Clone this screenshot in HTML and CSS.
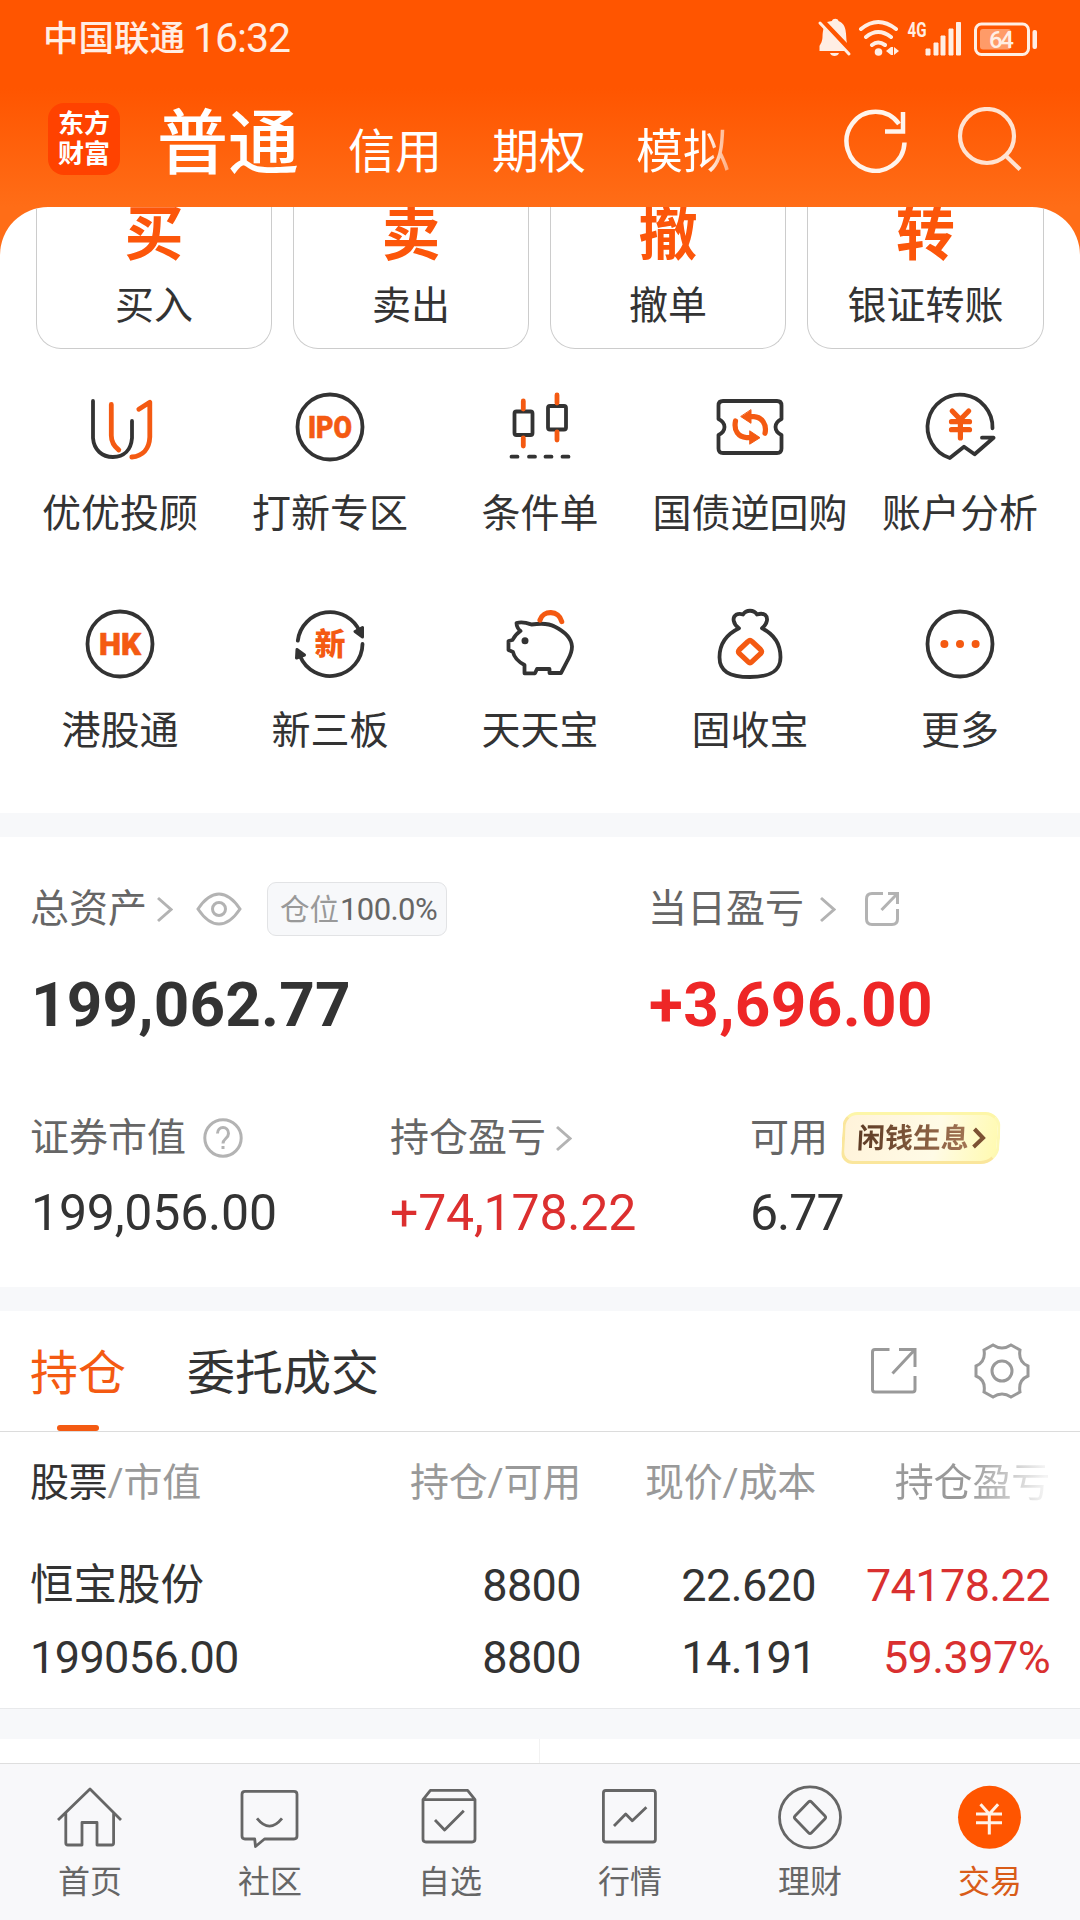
FILE: index.html
```html
<!DOCTYPE html>
<html lang="zh-CN">
<head>
<meta charset="utf-8">
<title>交易</title>
<link rel="stylesheet" href="styles.css">
</head>
<body>
<div class="app">
  <header class="header">
    <div class="status">
      <span class="carrier">中国联通</span><span class="clock">16:32</span>
      <svg class="status-icons" width="230" height="44" viewBox="0 0 230 44" fill="#ffeee4">
        <path d="M10 38h24L12 14c-1 3-1.500 6-1.500 10-.2 5-2 7-3 9v5zM15 9L35 30c-1-3-.5-8-1.500-13C32.500 11 29 9 26.500 8c-.5-3-6-3-6.500 0-2 .2-3.500.7-5 1zM18 40h9c-1 4-8 4-9 0z"/>
        <path d="M8 10L37 41" stroke="#ffeee4" stroke-width="3" stroke-linecap="round"/>
        <g fill="none" stroke="#ffeee4" stroke-width="4" stroke-linecap="round"><path d="M49 16q17-14 35 0M54 24q12-10 25 0M60 32q6-5 13 0"/></g>
        <circle cx="66.500" cy="39" r="3.800"/><path d="M74 38l5-4v8zM82 34l5 4-5 4zM79 34h2v8h-2z"/>
        <text x="95.500" y="24" class="net" textLength="19" lengthAdjust="spacingAndGlyphs">4G</text>
        <path d="M114 36h4v6h-4zM122 30h4v12h-4zM129 23h4v19h-4zM137 16h4v26h-4zM144.500 9.500h4v32.500h-4z" stroke="#ffeee4" stroke-width="1" stroke-linejoin="round"/>
        <rect x="163.500" y="11" width="53" height="30.500" rx="6" fill="none" stroke="#ffeee4" stroke-width="3"/>
        <rect x="168" y="16" width="31" height="20.500" rx="3" fill="#ff9b68"/><rect x="220.500" y="17" width="4.500" height="19" rx="2"/>
        <text x="177" y="35" class="batt" textLength="25">64</text>
      </svg>
    </div>
    <nav class="top-nav">
      <div class="logo"><span>东方</span><span>财富</span></div>
      <div class="accounts"><span class="account current">普通</span><span class="account">信用</span><span class="account">期权</span><span class="account fade-tab">模拟</span></div>
      <svg class="refresh" width="66" height="66" viewBox="0 0 66 66" fill="none" stroke="#fff4ec" stroke-width="4.500"><path d="M61.500 35.500A29 29.500 0 1 1 56 17"/><path d="M60 5v19.500H42"/></svg>
      <svg class="search" width="66" height="66" viewBox="0 0 66 66" fill="none" stroke="#ffe3d2" stroke-width="4.200"><circle cx="31" cy="29" r="27"/><path d="M50 49l14 13.500"/></svg>
    </nav>
  </header>

  <main class="sheet">
    <section class="trade-cards">
      <div class="trade-card"><b>买</b><span>买入</span></div>
      <div class="trade-card"><b>卖</b><span>卖出</span></div>
      <div class="trade-card"><b>撤</b><span>撤单</span></div>
      <div class="trade-card"><b>转</b><span>银证转账</span></div>
    </section>

    <section class="shortcuts">
      <div class="shortcut"><svg class="icon" viewBox="0 0 80 80"><path d="M13 14v37c1 12 9 19 20 19s18-7 19-19V34"/><path class="o" d="M31.300 17.500v31c0 7 3 11 7.500 14.500M58.800 22.300l11-7V50c-.5 12-7 19-18 20"/></svg><span>优优投顾</span></div>
      <div class="shortcut"><svg class="icon" viewBox="0 0 80 80"><circle cx="40" cy="40" r="32.500"/><text x="18" y="51" textLength="44" lengthAdjust="spacingAndGlyphs">IPO</text></svg><span>打新专区</span></div>
      <div class="shortcut"><svg class="icon" viewBox="0 0 80 80"><rect x="14.500" y="24.500" width="18" height="23.500" rx="2"/><rect x="48" y="19" width="18" height="23.500" rx="2"/><path class="o" d="M23.300 14v8M23.300 51v8M57 8v8M57 45v8"/><path d="M11.500 69.700h6M29 69.700h6M45.500 69.700h6M62.500 69.700h6"/></svg><span>条件单</span></div>
      <div class="shortcut"><svg class="icon" viewBox="0 0 80 80"><path d="M13 14h54q4.500 0 4.500 4.500V32q-6 3-6 8t6 8v13.500q0 4.500-4.500 4.500H13q-4.500 0-4.500-4.500V48q6-3 6-8t-6-8V18.500Q8.500 14 13 14z"/><path class="o thick" d="M25.500 34c-2 10 3 16 11 16.700h5M55 46.300c2-9-3-16-11-16.600h-5"/><path class="of" d="M40 44l10 6.700L40 57zM41 23v13.300l-10-6.600z"/></svg><span>国债逆回购</span></div>
      <div class="shortcut"><svg class="icon" viewBox="0 0 80 80"><path d="M72.500 41.300A32.500 32.500 0 1 0 29.800 71L44 59.700l10.600 7.600 19-16.600H62"/><path class="o thick" d="M32.200 24l8.200 8.500L48.700 24M40.400 32.500V51M31.500 34.700h18M31.500 42.700h18"/></svg><span>账户分析</span></div>
      <div class="shortcut"><svg class="icon" viewBox="0 0 80 80"><circle cx="40" cy="40" r="32.500"/><text x="19" y="51" textLength="42" lengthAdjust="spacingAndGlyphs">HK</text></svg><span>港股通</span></div>
      <div class="shortcut"><svg class="icon" viewBox="0 0 80 80"><path d="M7.800 36.700A32.500 32.500 0 0 1 70 28M72.500 40A32.500 32.500 0 0 1 10 52"/><path class="df" d="M65 27.500l7.500-4V33zM7 45.500l7.500 5.500-8 3z"/><text class="xin" x="24.500" y="51">新</text></svg><span>新三板</span></div>
      <div class="shortcut"><svg class="icon" viewBox="0 0 80 80"><path d="M16.500 19c6-2 11 0 15 1.500 7-1 16-2 23 2 10 5 17 12 17.500 20 0 7-3 11-5 15l-6 11.500H49.500V65H37l-2 4.300H24.500V61C17 57 14 53 13 48l-4.500-2V37l4-1c2-4 5-7 8-9-2-1-4-5-4-8z"/><circle class="df" cx="25" cy="36.700" r="2"/><path class="o thick" d="M40 16c3-10 19-10 21.700 1.500"/></svg><span>天天宝</span></div>
      <div class="shortcut"><svg class="icon" viewBox="0 0 80 80"><path d="M29 24.300c-6-4-7-11-3-13.500 2-1 5-1 7-.3 3-5 11-5 14 0 3-1 6-1 8 .3 3.500 3 2.500 9-3 13.500 12 6 18.500 16 18.500 29C70.500 67 61 73 40 73S9.500 67 9.500 53.300c0-13 7-23 19.500-29z"/><path class="o thick" d="M38 37.500q2-2 4 0l8.500 8q2 2 0 4.200l-8.500 8q-2 2-4 0l-8.500-8q-2-2 0-4.200z"/></svg><span>固收宝</span></div>
      <div class="shortcut"><svg class="icon" viewBox="0 0 80 80"><circle cx="40" cy="40" r="32.500"/><g class="dots"><circle cx="24.400" cy="40" r="4"/><circle cx="40" cy="40" r="4"/><circle cx="55.600" cy="40" r="4"/></g></svg><span>更多</span></div>
    </section>

    <section class="assets band">
      <div class="totals">
        <div class="total">
          <div class="label">总资产
            <svg class="chev" viewBox="0 0 18 28"><path d="M3 3l13 11.500L3 26"/></svg>
            <svg class="eye" viewBox="0 0 46 34"><path d="M2 17Q12 2 23 2t21 15Q34 32 23 32T2 17z"/><circle cx="23" cy="17" r="6.500"/></svg>
            <span class="position">仓位<em>100.0%</em></span>
          </div>
          <div class="big">199,062.77</div>
        </div>
        <div class="total">
          <div class="label">当日盈亏
            <svg class="chev far" viewBox="0 0 18 28"><path d="M3 3l13 11.500L3 26"/></svg>
            <svg class="share" viewBox="0 0 36 36"><path d="M19 2.500H8Q2.500 2.500 2.500 8v20q0 5.500 5.500 5.500h20q5.500 0 5.500-5.500V18M24 2.500h9.500V13M33 3L17.500 19"/></svg>
          </div>
          <div class="big red">+3,696.00</div>
        </div>
      </div>
      <div class="details">
        <div class="detail">
          <div class="label">证券市值<svg class="help" viewBox="0 0 40 40"><circle cx="20" cy="20" r="18.200"/><path d="M14.500 15.500c0-8 11-8 11 0 0 5-5.500 5-5.500 10M20 28v3"/></svg></div>
          <div class="amount">199,056.00</div>
        </div>
        <div class="detail">
          <div class="label">持仓盈亏<svg class="chev near" viewBox="0 0 18 28"><path d="M3 3l13 11.500L3 26"/></svg></div>
          <div class="amount red">+74,178.22</div>
        </div>
        <div class="detail">
          <div class="label">可用<span class="promo"><span>闲钱生息</span><svg viewBox="0 0 14 22"><path d="M2 2l9 9-9 9"/></svg></span></div>
          <div class="amount available">6.77</div>
        </div>
      </div>
    </section>

    <section class="holdings band">
      <div class="tabs">
        <span class="tab active">持仓</span><span class="tab">委托成交</span>
        <svg class="tab-share" viewBox="0 0 48 48"><path d="M19.500 2.500H5q-2.500 0-2.500 2.500v37.500Q2.500 45 5 45h37.500q2.500 0 2.500-2.500V29M29 2.500h16V20M44 3.500L22.500 26.500"/></svg>
        <svg class="gear" viewBox="0 0 56 56"><path d="M19 2q9 6 18 0l9 5q-2 12 8 16v10q-10 4-8 16l-9 5q-9-6-18 0l-9-5q2-12-8-16V23q10-4 8-16z"/><circle cx="28" cy="28" r="10"/></svg>
      </div>
      <div class="grid table-head"><span><i>股票</i>/市值</span><span>持仓/可用</span><span>现价/成本</span><span class="fade-col">持仓盈亏</span></div>
      <div class="grid table-name"><span class="stock">恒宝股份</span><span>8800</span><span>22.620</span><span class="red">74178.22</span></div>
      <div class="grid table-value"><span>199056.00</span><span>8800</span><span>14.191</span><span class="red">59.397%</span></div>
    </section>
    <section class="more-panel"><div></div><div></div></section>
  </main>

  <nav class="bottom-nav">
    <div class="item"><svg viewBox="0 0 70 70"><path d="M3 38L35 7l31 31M10.800 31v30q0 2 2 2H27V40.500h15V63h14.600q2 0 2-2V31"/></svg><span>首页</span></div>
    <div class="item"><svg viewBox="0 0 70 70"><path d="M10 9.300h49q3 0 3 3V54q0 3-3 3H29.500l-9 7.500-.8-7.500H10q-3 0-3-3V12.300q0-3 3-3zM22 36.300q12.500 15.500 25 0"/></svg><span>社区</span></div>
    <div class="item"><svg viewBox="0 0 70 70"><path d="M8 17.700V57q0 3 3 3h46q3 0 3-3V17.700L52.600 8.300H15.400zh52M20 38l9.600 10 19.200-19.300"/></svg><span>自选</span></div>
    <div class="item"><svg viewBox="0 0 70 70"><rect x="8.400" y="8.500" width="52" height="51.500" rx="2.500"/><path d="M19 44l11.700-12 6.600 6.800L51.400 25.300"/></svg><span>行情</span></div>
    <div class="item"><svg viewBox="0 0 70 70"><circle cx="35" cy="35.300" r="30.500"/><path d="M33.500 20q1.500-1.500 3 0l13.500 14q1.300 1.400 0 2.800l-13.500 14q-1.500 1.500-3 0L20 36.800q-1.300-1.400 0-2.800z"/></svg><span>理财</span></div>
    <div class="item on"><svg viewBox="0 0 70 70"><circle class="disc" cx="34.500" cy="35.300" r="31.500"/><path d="M25.500 22.300L34.300 32l8.800-9.700M34.300 32v20.500M21 32h26M21 40.700h26"/></svg><span>交易</span></div>
  </nav>
</div>
</body>
</html>
```
FILE: styles.css
```css
* { box-sizing: border-box; }
body { margin: 0; background: #fff; }
svg { flex: none; display: block; }
.app {
  width: 1080px; height: 1920px; overflow: hidden;
  display: flex; flex-direction: column;
  font-family: Roboto, "Noto Sans CJK SC", sans-serif;
  color: #333; font-size: 39px; line-height: 48px; white-space: nowrap;
  background: linear-gradient(#ff5500 88px, #ff6d17 207px);
}
.header { height: 207px; flex: none; display: flex; flex-direction: column; }
.status { height: 76px; display: flex; align-items: center; padding-left: 43px; color: #ffeee4; }
.carrier { font-size: 35.5px; font-weight: 500; padding-top: 2px; }
.clock { font-size: 41px; margin-left: 8px; letter-spacing: -1px; }
.status-icons { margin: 0 38px 6px auto; }
.net { font: bold 21px Roboto, sans-serif; }
.batt { font: 500 24px Roboto, sans-serif; }
.top-nav { height: 131px; display: flex; padding-left: 48px; color: #fff; }
.logo {
  width: 72px; height: 72px; margin-top: 27px; border-radius: 16px; background: #ff4200;
  display: flex; flex-direction: column; align-items: center; justify-content: center;
  font-size: 26px; font-weight: 700; line-height: 30px;
}
.accounts { width: 667px; margin-left: 37px; display: flex; align-items: baseline; padding-top: 26px; }
.account { font-size: 47px; line-height: 84px; width: 144px; }
.current { font-size: 71px; font-weight: 500; width: 191px; }
.fade-tab { background: linear-gradient(90deg, #fff 48%, #ffac7e 64%); -webkit-background-clip: text; background-clip: text; color: transparent; }
.refresh { margin: 31px 0 0 19px; }
.search { margin: 31px 0 0 47px; }

.sheet { flex: 1; background: #fff; border-radius: 48px 48px 0 0; overflow: hidden; }
.trade-cards { display: grid; grid-template-columns: repeat(3, 236px) 237px; gap: 21px; padding: 0 36px; height: 142px; }
.trade-card {
  height: 142px; border: 1px solid #ccc; border-top: 0; border-radius: 0 0 25px 25px;
  display: flex; flex-direction: column; align-items: center; justify-content: flex-end; padding-bottom: 18px;
}
.trade-card b { font-size: 59px; line-height: 60px; color: #fc560a; margin-bottom: 17px; }

.shortcuts { display: grid; grid-template-columns: repeat(5, 210px); grid-auto-rows: 217px; padding: 38px 15px 0; height: 464px; }
.shortcut { display: flex; flex-direction: column; align-items: center; }
.shortcut span { margin-top: 23px; }
.icon { width: 80px; height: 80px; fill: none; stroke: #333; stroke-width: 3.8px; stroke-linecap: round; stroke-linejoin: round; }
.icon .o { stroke: #f45a12; stroke-width: 4.8px; }
.icon .thick { stroke-width: 5.2px; }
.icon .of { fill: #f45a12; stroke: #f45a12; stroke-width: 1px; }
.icon .df { fill: #333; stroke-width: 3px; }
.icon text { font: 900 31px Roboto, sans-serif; fill: #f45a12; stroke: #f45a12; stroke-width: .6px; }
.icon .xin { font: 900 31px "Noto Sans CJK SC", sans-serif; stroke: none; }
.icon .dots { fill: #f45a12; stroke: none; }

.band { border-top: 24px solid #f7f8fa; }
.assets { height: 474px; padding: 45px 30px 0; color: #666; }
.totals { display: grid; grid-template-columns: 618px 1fr; }
.label { display: flex; align-items: center; height: 54px; }
.label svg { fill: none; stroke: #b3b3b3; stroke-width: 3px; }
.chev { width: 18px; height: 28px; margin-left: 8px; }
.far { margin-left: 14px; }
.eye { width: 46px; height: 34px; margin-left: 23px; }
.position {
  width: 180px; height: 54px; margin-left: 25px; border: 1px solid #e2e3e5; border-radius: 9px; background: #f7f8fa;
  font-size: 29.5px; line-height: 54px; padding-left: 12px; color: #999;
}
.position em { font-style: normal; color: #666; font-size: 31px; letter-spacing: -.6px; margin-left: 1px; }
.share { width: 36px; height: 36px; margin-left: 28px; }
.big { font-size: 62px; font-weight: 700; line-height: 72px; margin-top: 33px; color: #333; letter-spacing: .2px; padding-left: 1px; }
.assets .red { color: #ee2626; }
.big.red { letter-spacing: .4px; }
.details { display: grid; grid-template-columns: 360px 360px 1fr; margin-top: 70px; }
.help { width: 40px; height: 40px; margin-left: 17px; }
.near { margin-left: 8px; }
.amount { font-size: 50px; line-height: 60px; color: #333; margin-top: 18px; letter-spacing: -.2px; padding-left: 1px; }
.details .amount.red { color: #dc2f2f; padding-left: 0; }
.available { letter-spacing: -1px; padding-left: 0; }
.promo {
  width: 158px; height: 52px; margin-left: 14px; border: 3px solid #fae69c; border-top-color: #fdf6a8; border-right-color: #fdf8b4; border-radius: 14px 16px 18px 12px;
  background: linear-gradient(100deg, #fff3da, #fffbe6 60%, #fffab0); transform: skewX(-3deg);
  display: flex; align-items: center; gap: 3px; padding-left: 12px; font-size: 28px; font-weight: 700; line-height: 40px;
}
.promo span { background: linear-gradient(90deg, #5d3b24, #a27453); -webkit-background-clip: text; background-clip: text; color: transparent; padding-top: 2px; }
.promo svg { width: 14px; height: 22px; stroke: #7c5132; stroke-width: 4px; }

.holdings { height: 422px; border-bottom: 1px solid #e8e9eb; }
.tabs { height: 121px; border-bottom: 1px solid #dcdcdc; display: flex; padding-left: 30px; font-size: 48px; line-height: 125px; }
.tab { margin-right: 61px; height: 120px; }
.active { color: #f45a12; position: relative; }
.active::after { content: ""; position: absolute; left: 27px; bottom: 0; width: 42px; height: 6px; border-radius: 3px; background: #f45a12; }
.tabs svg { fill: none; stroke: #999; stroke-width: 3px; }
.tab-share { width: 48px; height: 48px; margin: 36px 0 0 auto; }
.gear { width: 56px; height: 56px; margin: 32px 50px 0 56px; }
.grid { display: grid; grid-template-columns: 350px 201px 235px 234px; padding-left: 30px; text-align: right; }
.grid span:first-child { text-align: left; }
.table-head { height: 102px; line-height: 102px; color: #999; letter-spacing: -.2px; }
.table-head i { font-style: normal; color: #333; }
.fade-col { background: linear-gradient(90deg, #999 65%, #f4f4f4 98%); -webkit-background-clip: text; background-clip: text; color: transparent; }
.table-name, .table-value { font-size: 45px; letter-spacing: -.6px; line-height: 72px; }
.table-name { margin-top: 16px; }
.grid .stock { font-size: 43.5px; letter-spacing: 0; }
.grid .red { color: #d93030; }
.more-panel { border-top: 30px solid #f7f8fa; display: grid; grid-template-columns: 540px 1fr; height: 54px; }
.more-panel div:first-child { border-right: 1px solid #f2f2f2; }

.bottom-nav { height: 157px; flex: none; border-top: 1px solid #dedede; background: #f8f8fa; display: grid; grid-template-columns: repeat(6, 1fr); }
.item { display: flex; flex-direction: column; align-items: center; padding-top: 18px; font-size: 32px; line-height: 40px; color: #666; }
.item svg { width: 70px; height: 70px; fill: none; stroke: #666; stroke-width: 2.8px; stroke-linejoin: round; }
.item span { margin-top: 10px; }
.on { color: #d95c18; }
.item .disc { fill: #ff5500; stroke: none; }
.item.on svg { stroke: #fff3e8; stroke-width: 3px; }
```
